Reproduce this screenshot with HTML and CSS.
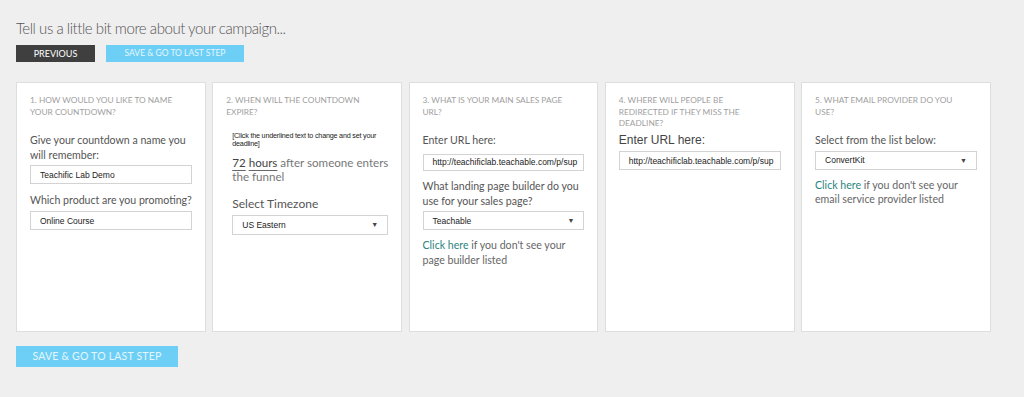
FILE: index.html
```html
<!DOCTYPE html>
<html>
<head>
<meta charset="utf-8">
<link rel="stylesheet" href="styles.css">
</head>
<body>
<div class="page">
  <h1 class="title">Tell us a little bit more about your campaign...</h1>
  <div class="top-actions">
    <button class="btn btn-dark">PREVIOUS</button>
    <button class="btn btn-blue">SAVE &amp; GO TO LAST STEP</button>
  </div>
  <div class="cards">
    <div class="card">
      <div class="card-head">1. HOW WOULD YOU LIKE TO NAME YOUR COUNTDOWN?</div>
      <div class="label l-name">Give your countdown a name you will remember:</div>
      <div class="field tall">Teachific Lab Demo</div>
      <div class="label l-product">Which product are you promoting?</div>
      <div class="field tall">Online Course</div>
    </div>
    <div class="card">
      <div class="card-head">2. WHEN WILL THE COUNTDOWN EXPIRE?</div>
      <div class="inset">
        <div class="hint">[Click the underlined text to change and set your deadline]</div>
        <div class="deadline"><span class="ul">72</span> <span class="ul">hours</span> after someone enters the funnel</div>
        <div class="label tz">Select Timezone</div>
        <div class="field select tz-field"><span>US Eastern</span><span class="arrow">▼</span></div>
      </div>
    </div>
    <div class="card">
      <div class="card-head">3. WHAT IS YOUR MAIN SALES PAGE URL?</div>
      <div class="label l-url">Enter URL here:</div>
      <div class="field short">http://teachificlab.teachable.com/p/sup</div>
      <div class="label l-builder">What landing page builder do you use for your sales page?</div>
      <div class="field select tall"><span>Teachable</span><span class="arrow">▼</span></div>
      <div class="label note"><span class="link">Click here</span> if you don't see your page builder listed</div>
    </div>
    <div class="card">
      <div class="card-head">4. WHERE WILL PEOPLE BE REDIRECTED IF THEY MISS THE DEADLINE?</div>
      <div class="label dark">Enter URL here:</div>
      <div class="field tall">http://teachificlab.teachable.com/p/sup</div>
    </div>
    <div class="card">
      <div class="card-head">5. WHAT EMAIL PROVIDER DO YOU USE?</div>
      <div class="label l-list">Select from the list below:</div>
      <div class="field select tall"><span>ConvertKit</span><span class="arrow">▼</span></div>
      <div class="label note"><span class="link">Click here</span> if you don't see your email service provider listed</div>
    </div>
  </div>
  <button class="btn btn-blue btn-big">SAVE &amp; GO TO LAST STEP</button>
</div>
</body>
</html>
```
FILE: styles.css
```css
html, body {
  margin: 0;
  padding: 0;
  background: #efefef;
}
.page {
  padding: 18px 16px 0 16px;
  font-family: Lato, "Open Sans", sans-serif;
  color: #555;
}
.title {
  margin: 0;
  font-family: Lato, "Open Sans", sans-serif;
  font-weight: 300;
  font-size: 15px;
  line-height: 20px;
  color: #555;
  letter-spacing: -0.45px;
}
.top-actions {
  display: flex;
  gap: 11px;
  margin-top: 7px;
}
.btn {
  border: 0;
  margin: 0;
  padding: 0;
  font-family: Lato, "Open Sans", sans-serif;
  font-size: 8.5px;
  height: 17px;
  line-height: 17px;
  color: #fff;
  cursor: pointer;
}
.btn-dark {
  background: #3f3f3f;
  width: 79px;
  font-size: 9px;
}
.btn-blue {
  background: #6dcff6;
  width: 138px;
  color: #e4f6fd;
}
.btn-big {
  display: block;
  margin-top: 14px;
  width: 162px;
  height: 21px;
  line-height: 21px;
  font-size: 10.5px;
  letter-spacing: 0.2px;
}
.cards {
  display: grid;
  grid-template-columns: repeat(5, minmax(0, 1fr));
  gap: 6.3px;
  width: 975px;
  margin-top: 20px;
}
.card {
  background: #fff;
  border: 1px solid #dcdee0;
  height: 250px;
  box-sizing: border-box;
  padding: 12px 13px 0 13px;
  min-width: 0;
}
.card-head {
  font-family: Lato, "Open Sans", sans-serif;
  font-size: 8.3px;
  line-height: 11.7px;
  color: #a0a0a0;
  max-width: 150px;
  margin-bottom: 14.5px;
}
.card:nth-child(4) .card-head {
  margin-bottom: 3px;
}
.label {
  font-size: 10.6px;
  line-height: 15px;
  color: #555;
  margin-bottom: 3px;
  margin-right: -8px;
}
.l-name { line-height: 15.3px; margin-bottom: 1.5px; margin-right: 0; }
.l-product { margin-top: -1px; white-space: nowrap; }
.l-url { margin-bottom: 6px; }
.l-builder { line-height: 14.4px; margin-top: -1.5px; margin-right: 0; }
.label.dark {
  color: #444;
  font-family: "Liberation Sans", Arial, sans-serif;
  font-size: 12px;
}
.label.note {
  margin-top: -2px;
  line-height: 14.5px;
  color: #666;
  margin-right: 0;
}
.link {
  color: #2b8580;
}
.field {
  border: 1px solid #d3d3d3;
  background: #fff;
  box-sizing: border-box;
  font-family: "Liberation Sans", Arial, sans-serif;
  font-size: 8.5px;
  color: #222;
  padding: 0 9px;
  display: flex;
  align-items: center;
  justify-content: space-between;
  margin-bottom: 10px;
  white-space: nowrap;
  overflow: hidden;
}
.field.tall { height: 19px; }
.field.short { height: 17px; }
.field.tz-field { height: 20px; }
.arrow {
  font-size: 7px;
  color: #444;
}
.inset {
  padding-left: 6px;
  margin-top: -1px;
}
.hint {
  font-family: "Liberation Sans", Arial, sans-serif;
  font-size: 7.2px;
  line-height: 8.3px;
  color: #222;
  letter-spacing: -0.2px;
}
.deadline {
  margin-top: 7.5px;
  font-size: 11.6px;
  line-height: 14px;
  color: #777;
  margin-right: -6px;
}
.ul {
  color: #444;
  text-decoration: underline;
  text-decoration-color: #666;
  text-underline-offset: 3px;
}
.label.tz {
  font-size: 12px;
  margin-top: 12px;
  margin-bottom: 3.5px;
}
```
